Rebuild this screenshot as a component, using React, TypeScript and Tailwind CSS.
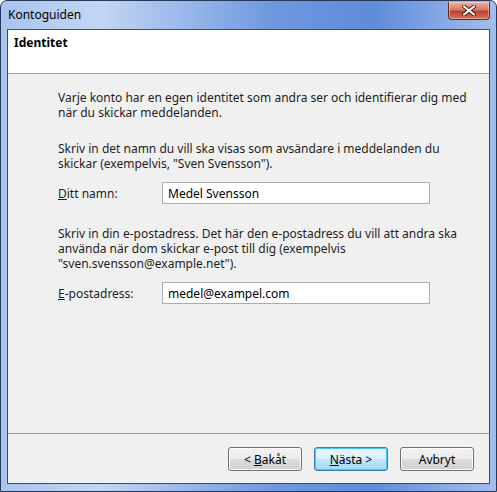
import React from "react";

const font = { fontFamily: '"Segoe UI", "Noto Sans", sans-serif' };

function CloseButton() {
  return (
    <div className="mt-[1px] flex h-[18px] w-[42px] items-center justify-center rounded-b-[4px] border border-t-0 border-[#6b2a22] bg-[linear-gradient(to_bottom,#e8b2a6_0%,#d57a68_45%,#c2412e_55%,#d8705a_100%)] shadow-[inset_0_0_0_1px_rgba(255,255,255,0.35)]">
      <svg width="14" height="11" viewBox="0 0 14 11">
        <path d="M2 1.5 L12 9.5 M12 1.5 L2 9.5" stroke="#4a1a14" strokeWidth="4" strokeLinecap="round" />
        <path d="M2 1.5 L12 9.5 M12 1.5 L2 9.5" stroke="#ffffff" strokeWidth="2.2" strokeLinecap="round" />
      </svg>
    </div>
  );
}

function Button({ children, primary }: { children: React.ReactNode; primary?: boolean }) {
  return (
    <div
      className={`flex h-[24px] w-[74px] items-center justify-center rounded-[3px] border text-[12px] text-black ${
        primary
          ? "border-[#3c7fb1] bg-[linear-gradient(to_bottom,#eaf6fd_0%,#d9f0fc_50%,#bee6fd_51%,#a7d9f5_100%)] shadow-[inset_0_0_0_1px_#48c6f9]"
          : "border-[#707070] bg-[linear-gradient(to_bottom,#f2f2f2_0%,#ebebeb_50%,#dddddd_51%,#cfcfcf_100%)] shadow-[inset_0_0_0_1px_#fcfcfc]"
      }`}
    >
      {children}
    </div>
  );
}

function Field({ label, value }: { label: React.ReactNode; value: string }) {
  return (
    <div className="flex items-center">
      <div className="w-[104px]">{label}</div>
      <div className="flex h-[22px] w-[268px] items-center border border-[#abadb3] bg-white pl-[5px] text-black">
        {value}
      </div>
    </div>
  );
}

export default function App() {
  return (
    <div
      style={font}
      className="flex h-[492px] w-[497px] flex-col overflow-hidden rounded-t-[7px] border border-[#27395a] bg-[linear-gradient(to_right,#a9c4ee_0%,#c2d6f4_20%,#6f98df_55%,#5f8bdb_75%,#a3beec_100%)] text-[12px] leading-[15px] text-[#1e1e1e]"
    >
      <div className="flex h-[28px] shrink-0 items-start justify-between pl-[7px] pr-[6px]">
        <span className="mt-[6px] text-black">Kontoguiden</span>
        <CloseButton />
      </div>
      <div className="mx-[6px] mb-[7px] flex flex-1 flex-col border border-[#3b4f74] bg-[#f0f0f0]">
        <div className="h-[44px] shrink-0 border-b border-[#a0a0a0] bg-white pl-[6px] pt-[5px] font-bold text-black">
          Identitet
        </div>
        <div className="flex flex-1 flex-col pl-[50px] pt-[16px]">
          <p>
            Varje konto har en egen identitet som andra ser och identifierar dig med
            <br />
            när du skickar meddelanden.
          </p>
          <p className="mt-[21px]">
            Skriv in det namn du vill ska visas som avsändare i meddelanden du
            <br />
            skickar (exempelvis, "Sven Svensson").
          </p>
          <div className="mt-[11px]">
            <Field
              label={
                <span>
                  <span className="underline">D</span>itt namn:
                </span>
              }
              value="Medel Svensson"
            />
          </div>
          <p className="mt-[22px]">
            Skriv in din e-postadress. Det här den e-postadress du vill att andra ska
            <br />
            använda när dom skickar e-post till dig (exempelvis
            <br />
            "sven.svensson@example.net").
          </p>
          <div className="mt-[11px]">
            <Field
              label={
                <span>
                  <span className="underline">E</span>-postadress:
                </span>
              }
              value="medel@exampel.com"
            />
          </div>
        </div>
        <div className="flex h-[50px] shrink-0 items-start justify-end gap-[12px] border-t border-[#a0a0a0] pr-[15px] pt-[13px]">
          <Button>
            &lt;&nbsp;<span className="underline">B</span>akåt
          </Button>
          <Button primary>
            <span className="underline">N</span>ästa &gt;
          </Button>
          <Button>Avbryt</Button>
        </div>
      </div>
    </div>
  );
}
